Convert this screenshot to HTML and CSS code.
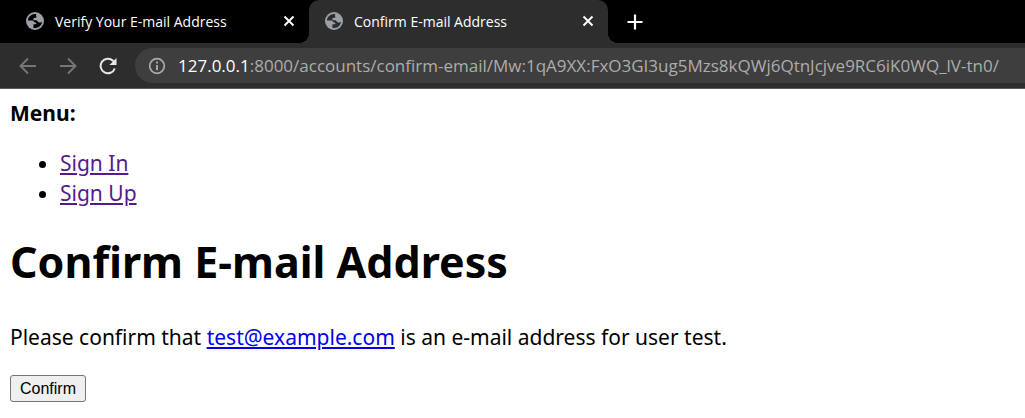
FILE: index.html
```html
<!DOCTYPE html>
<html lang="en">
<head>
<meta charset="utf-8">
<title>Confirm E-mail Address</title>
<link rel="stylesheet" href="styles.css">
</head>
<body>
<svg class="sprite" aria-hidden="true">
  <symbol id="globe" viewBox="0 0 18 18">
    <circle cx="9" cy="9" r="9" fill="#9aa0a6"/>
    <path class="land" d="M10.500 2.100C6 1.200 2 4.500 2 8.600h4.200c1.600 0 1.500 1.600 2.700 2 .9.300 1.500.2 1.500 1 0 1-1.400.8-3 .9v3.200c4.300 1 8.300-1.700 8.600-6-.8.700-1.700.9-2.700.8-1.200-.1-1.600-.9-2.200-1.700-.8-.9-2-.2-3.100-.6-.9-.4-1-1.400-.4-2 .7-.7 2.300-.2 2.700-1 .300-.7-.5-1.300-.3-2 .1-.4.200-.7.500-1.100z"/>
  </symbol>
  <symbol id="close" viewBox="0 0 12 12"><path d="M1.500 1.500l9 9M10.500 1.500l-9 9" stroke="currentColor" stroke-width="1.900"/></symbol>
  <symbol id="arrow" viewBox="0 0 18 18"><path d="M17 9H2M9 1.500L1.500 9 9 16.500" fill="none" stroke="currentColor" stroke-width="1.900"/></symbol>
</svg>
<header class="browser">
  <div class="tabs">
    <div class="tab">
      <svg class="favicon"><use href="#globe"/></svg>
      <span class="tab-title">Verify Your E-mail Address</span>
      <button class="close" aria-label="Close tab"><svg><use href="#close"/></svg></button>
    </div>
    <div class="tab tab-active">
      <svg class="favicon"><use href="#globe"/></svg>
      <span class="tab-title">Confirm E-mail Address</span>
      <button class="close" aria-label="Close tab"><svg><use href="#close"/></svg></button>
    </div>
    <button class="new-tab" aria-label="New tab"><svg viewBox="0 0 16 16"><path d="M8 .5v15M.5 8h15" stroke="currentColor" stroke-width="2.200"/></svg></button>
  </div>
  <div class="toolbar">
    <button class="nav" aria-label="Back"><svg><use href="#arrow"/></svg></button>
    <button class="nav" aria-label="Forward"><svg class="flip"><use href="#arrow"/></svg></button>
    <button class="nav nav-reload" aria-label="Reload"><svg viewBox="0 0 18 18"><path d="M15.800 11.500A7.300 7.300 0 1 1 14 3.700L16 6" fill="none" stroke="currentColor" stroke-width="2"/><path d="M17.500 1v7h-7z" fill="currentColor"/></svg></button>
    <div class="address">
      <svg class="info" viewBox="0 0 18 18"><circle cx="9" cy="9" r="7.300" fill="none" stroke="currentColor" stroke-width="1.700"/><path d="M9 4.500v2M9 8v5.300" stroke="currentColor" stroke-width="1.900"/></svg>
      <span class="url"><span class="host">127.0.0.1</span>:8000/accounts/confirm-email/Mw:1qA9XX:FxO3GI3ug5Mzs8kQWj6QtnJcjve9RC6iK0WQ_lV-tn0/</span>
    </div>
  </div>
</header>
<main class="page">
  <strong class="menu-label">Menu:</strong>
  <ul class="menu">
    <li><a class="visited" href="#signin">Sign In</a></li>
    <li><a class="visited" href="#signup">Sign Up</a></li>
  </ul>
  <h1 class="heading">Confirm E-mail Address</h1>
  <p class="message">Please confirm that <a class="mail" href="mailto:test@example.com">test@example.com</a> is an e-mail address for user test.</p>
  <form class="form"><button class="confirm" type="button">Confirm</button></form>
</main>
</body>
</html>
```
FILE: styles.css
```css
* { box-sizing: border-box; }
body { margin: 0; background: #fff; }
.sprite { position: absolute; width: 0; height: 0; }
.browser { background: #000; color: #fff; font-family: "Open Sans", "Noto Sans", sans-serif; }
.browser button { display: flex; align-items: center; justify-content: center; padding: 0; border: 0; background: none; color: inherit; }
.tabs { display: flex; height: 43px; padding-left: 10px; }
.tab { position: relative; display: flex; align-items: center; width: 299px; padding: 0 14px 1px 16px; font-size: 14px; }
.tab-active { background: #2d2d2d; border-radius: 10px 10px 0 0; }
.tab-active::before, .tab-active::after { content: ""; position: absolute; bottom: 0; width: 10px; height: 10px; }
.tab-active::before { right: 100%; background: radial-gradient(circle at 0 0, #000 10px, #2d2d2d 10px); }
.tab-active::after { left: 100%; background: radial-gradient(circle at 100% 0, #000 10px, #2d2d2d 10px); }
.favicon { width: 18px; height: 18px; margin-right: 11px; color: #000; }
.tab-active .favicon { color: #2d2d2d; }
.land { fill: currentColor; }
.tab-title { flex: 1; white-space: nowrap; }
.close svg { width: 12px; height: 12px; }
.new-tab { width: 54px; }
.new-tab svg { width: 16px; height: 16px; }
.toolbar { display: flex; align-items: center; height: 46px; padding-left: 8px; background: #2d2d2d; border-bottom: 1px solid #5a5a5a; }
.nav { width: 40px; height: 35px; }
.browser .nav { color: #777; }
.browser .nav-reload { color: #e8e8e8; }
.nav svg { width: 18px; height: 18px; }
.flip { transform: scaleX(-1); }
.address { flex: 1; display: flex; align-items: center; height: 35px; margin-left: 7px; padding-left: 13px; overflow: hidden; background: #3e3e3e; border-radius: 18px 0 0 18px; }
.info { width: 18px; height: 18px; margin-right: 12px; color: #a8acb0; }
.url { color: #adadad; font-size: 17px; white-space: nowrap; }
.host { color: #fff; }
.page { padding: 9px 10px; color: #000; font: 21px/30px "Noto Sans", "Open Sans", sans-serif; }
.menu-label { display: block; }
.menu { margin: 20px 0 24px; padding-left: 50px; }
.visited { color: #551a8b; }
.heading { margin: 0 0 30px; font-size: 43px; line-height: 60px; }
.message { margin: 0 0 23px; }
.mail { color: #00e; }
.confirm { display: block; height: 27px; padding: 1px 9px; border: 1px solid #767676; border-radius: 3px; background: #efefef; color: #000; font: 16px "Liberation Sans", Arial, sans-serif; }
```
